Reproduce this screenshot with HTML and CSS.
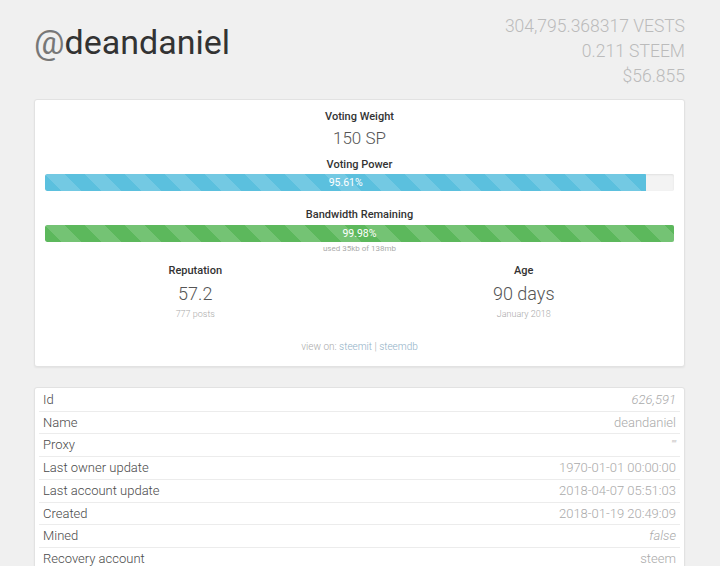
FILE: index.html
```html
<!DOCTYPE html>
<html>
<head>
<meta charset="utf-8">
<link rel="stylesheet" href="styles.css">
</head>
<body>
<div class="page">
  <header class="header">
    <h1 class="title"><span class="at">@</span>deandaniel</h1>
    <div class="balances">
      <div>304,795.368317 VESTS</div>
      <div>0.211 STEEM</div>
      <div>$56.855</div>
    </div>
  </header>

  <section class="card stats">
    <div class="label">Voting Weight</div>
    <div class="value vw">150 SP</div>
    <div class="label vp">Voting Power</div>
    <div class="progress"><div class="bar blue" style="width:95.61%">95.61%</div></div>
    <div class="label bw">Bandwidth Remaining</div>
    <div class="progress bw-bar"><div class="bar green" style="width:99.98%">99.98%</div></div>
    <div class="small">used 35kb of 138mb</div>
    <div class="cols">
      <div class="col">
        <div class="label">Reputation</div>
        <div class="value big">57.2</div>
        <div class="sub">777 posts</div>
      </div>
      <div class="col">
        <div class="label">Age</div>
        <div class="value big">90 days</div>
        <div class="sub">January 2018</div>
      </div>
    </div>
    <div class="viewon">view on: <a href="#">steemit</a> | <a href="#">steemdb</a></div>
  </section>

  <section class="card props">
    <div class="row"><span class="k">Id</span><span class="v it">626,591</span></div>
    <div class="row"><span class="k">Name</span><span class="v">deandaniel</span></div>
    <div class="row"><span class="k">Proxy</span><span class="v it small-q">""</span></div>
    <div class="row"><span class="k">Last owner update</span><span class="v">1970-01-01 00:00:00</span></div>
    <div class="row"><span class="k">Last account update</span><span class="v">2018-04-07 05:51:03</span></div>
    <div class="row"><span class="k">Created</span><span class="v">2018-01-19 20:49:09</span></div>
    <div class="row"><span class="k">Mined</span><span class="v it">false</span></div>
    <div class="row"><span class="k">Recovery account</span><span class="v">steem</span></div>
  </section>
</div>
</body>
</html>
```

FILE: styles.css
```css
html, body {
  margin: 0;
  padding: 0;
  background: #f0f0f0;
  font-family: Roboto, "Liberation Sans", Arial, sans-serif;
  overflow: hidden;
}
.page {
  padding: 0 35px 0 34px;
}
.header {
  display: flex;
  justify-content: space-between;
  align-items: flex-start;
  padding-top: 14px;
  margin-bottom: 10px;
}
.title {
  margin: 8px 0 0 0;
  font-size: 34px;
  line-height: 40px;
  font-weight: 400;
  color: #333;
}
.title .at {
  color: #777;
}
.balances {
  text-align: right;
  font-size: 17.5px;
  line-height: 25px;
  font-weight: 300;
  color: #bbb;
}
.card {
  background: #fff;
  border: 1px solid #e2e2e2;
  border-radius: 3px;
  box-shadow: 0 1px 2px rgba(0,0,0,0.06);
}
.stats {
  padding: 9px 10px 12px;
  text-align: center;
}
.label {
  font-size: 11px;
  line-height: 16px;
  font-weight: 500;
  color: #333;
}
.value {
  font-weight: 300;
  color: #555;
}
.vw {
  margin-top: 2px;
  font-size: 17px;
  line-height: 22px;
}
.vp { margin-top: 8px; }
.progress {
  margin-top: 1px;
  height: 17px;
  background: #f3f3f3;
  border-radius: 2px;
  box-shadow: inset 0 1px 2px rgba(0,0,0,0.08);
  overflow: hidden;
  display: flex;
}
.bar {
  height: 100%;
  font-size: 10.5px;
  line-height: 17px;
  color: #fff;
  text-align: center;
  background-size: 40px 40px;
  background-image: linear-gradient(45deg, rgba(255,255,255,.15) 25%, transparent 25%, transparent 50%, rgba(255,255,255,.15) 50%, rgba(255,255,255,.15) 75%, transparent 75%, transparent);
  border-radius: 2px 0 0 2px;
}
.bar.blue { background-color: #5bc0de; }
.bar.green { background-color: #5cb85c; }
.bw { margin-top: 16px; }
.bw-bar { margin-top: 2px; }
.small {
  margin-top: 1px;
  font-size: 8px;
  line-height: 11px;
  color: #aaa;
}
.cols {
  display: grid;
  grid-template-columns: 1fr 1fr;
  margin: 9px -14px 0 -14px;
}
.big {
  margin-top: 4px;
  font-size: 18px;
  line-height: 22px;
}
.sub {
  margin-top: 3px;
  font-size: 9px;
  line-height: 12px;
  color: #aaa;
  font-weight: 300;
}
.viewon {
  margin-top: 20px;
  font-size: 10px;
  line-height: 14px;
  color: #aaa;
  font-weight: 300;
}
.viewon a {
  color: #8fb0c6;
  text-decoration: none;
}
.props {
  margin-top: 20px;
  padding: 1px 4px 0;
}
.row {
  display: flex;
  justify-content: space-between;
  padding: 0 4px;
  line-height: 21.7px;
  font-size: 13px;
  font-weight: 300;
  border-bottom: 1px solid #ececec;
}
.k { color: #4a4a4a; }
.v { color: #aaa; }
.it { font-style: italic; }
.small-q { font-size: 10px; }
```
